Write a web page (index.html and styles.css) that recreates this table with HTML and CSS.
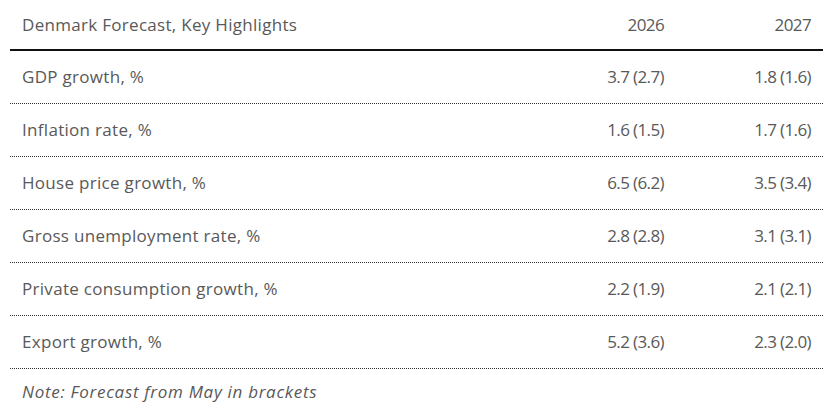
FILE: index.html
```html
<!DOCTYPE html>
<html lang="en">
<head>
<meta charset="utf-8">
<title>Denmark Forecast</title>
<link rel="stylesheet" href="styles.css">
</head>
<body>
<div class="forecast">
  <div class="row head">
    <div class="cell label">Denmark Forecast, Key Highlights</div>
    <div class="cell num">2026</div>
    <div class="cell num">2027</div>
  </div>
  <div class="row">
    <div class="cell label">GDP growth, %</div>
    <div class="cell num">3.7 (2.7)</div>
    <div class="cell num">1.8 (1.6)</div>
  </div>
  <div class="row">
    <div class="cell label">Inflation rate, %</div>
    <div class="cell num">1.6 (1.5)</div>
    <div class="cell num">1.7 (1.6)</div>
  </div>
  <div class="row">
    <div class="cell label">House price growth, %</div>
    <div class="cell num">6.5 (6.2)</div>
    <div class="cell num">3.5 (3.4)</div>
  </div>
  <div class="row">
    <div class="cell label">Gross unemployment rate, %</div>
    <div class="cell num">2.8 (2.8)</div>
    <div class="cell num">3.1 (3.1)</div>
  </div>
  <div class="row">
    <div class="cell label">Private consumption growth, %</div>
    <div class="cell num">2.2 (1.9)</div>
    <div class="cell num">2.1 (2.1)</div>
  </div>
  <div class="row">
    <div class="cell label">Export growth, %</div>
    <div class="cell num">5.2 (3.6)</div>
    <div class="cell num">2.3 (2.0)</div>
  </div>
  <div class="note">Note: Forecast from May in brackets</div>
</div>
</body>
</html>
```
FILE: styles.css
```css
html, body {
  margin: 0;
  padding: 0;
  background: #ffffff;
}
body {
  font-family: "Open Sans", "Noto Sans", "Liberation Sans", sans-serif;
  font-size: 17px;
  color: #595959;
}
.forecast {
  width: 813px;
  margin-left: 10px;
}
.row {
  display: grid;
  grid-template-columns: 1fr 150px 147px;
  align-items: center;
  height: 52px;
  border-bottom: 1px dotted #333333;
}
.row.head {
  height: 49px;
  border-bottom: 2px solid #111111;
}
.cell {
  padding: 0 12px;
  line-height: 22px;
}
.label {
  letter-spacing: 0.3px;
}
.num {
  text-align: right;
  letter-spacing: -0.6px;
}
.note {
  height: 45px;
  display: flex;
  align-items: center;
  padding-left: 12px;
  font-style: italic;
  letter-spacing: 0.7px;
}
```
